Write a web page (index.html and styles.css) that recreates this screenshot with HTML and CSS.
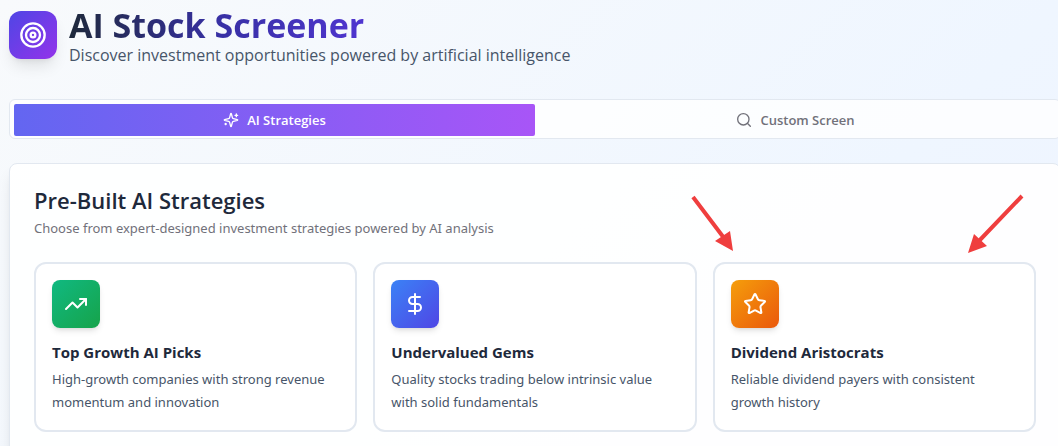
FILE: index.html
```html
<!DOCTYPE html>
<html lang="en">

<head>
    <meta charset="UTF-8">
    <meta name="viewport" content="width=device-width, initial-scale=1.0">
    <title>AI Stock Screener</title>
    <link rel="stylesheet" href="styles.css">
</head>

<body>
    <main class="page">
        <header class="header">
            <div class="logo">
                <svg class="icon-lg" viewBox="0 0 24 24">
                    <circle cx="12" cy="12" r="10" />
                    <circle cx="12" cy="12" r="6" />
                    <circle cx="12" cy="12" r="2" />
                </svg>
            </div>
            <div>
                <h1>AI Stock Screener</h1>
                <p class="subtitle">Discover investment opportunities powered by artificial intelligence</p>
            </div>
        </header>

        <div class="tabs" role="tablist">
            <button type="button" class="tab active" role="tab" aria-selected="true">
                <svg class="icon-sm" viewBox="0 0 24 24">
                    <path d="M9.94 15.5A2 2 0 0 0 8.5 14.06l-6.14-1.58a.5.5 0 0 1 0-.96L8.5 9.94A2 2 0 0 0 9.94 8.5l1.58-6.14a.5.5 0 0 1 .96 0l1.58 6.14a2 2 0 0 0 1.44 1.44l6.14 1.58a.5.5 0 0 1 0 .96l-6.14 1.58a2 2 0 0 0-1.44 1.44l-1.58 6.14a.5.5 0 0 1-.96 0z" />
                    <path d="M20 3v4M22 5h-4M4 17v2M5 18H3" />
                </svg>
                AI Strategies
            </button>
            <button type="button" class="tab" role="tab" aria-selected="false">
                <svg class="icon-sm" viewBox="0 0 24 24">
                    <circle cx="11" cy="11" r="8.5" />
                    <path d="m21.5 21.5-4.5-4.5" />
                </svg>
                Custom Screen
            </button>
        </div>

        <section class="panel">
            <h2>Pre-Built AI Strategies</h2>
            <p class="description">Choose from expert-designed investment strategies powered by AI analysis</p>

            <div class="cards">
                <article class="card">
                    <div class="card-icon green">
                        <svg class="icon" viewBox="0 0 24 24">
                            <path d="M22 7l-8.5 8.5-5-5L2 17" />
                            <path d="M16 7h6v6" />
                        </svg>
                    </div>
                    <h3>Top Growth AI Picks</h3>
                    <p>High-growth companies with strong revenue momentum and innovation</p>
                </article>
                <article class="card">
                    <div class="card-icon blue">
                        <svg class="icon" viewBox="0 0 24 24">
                            <path d="M12 2v20" />
                            <path d="M17 5H9.5a3.5 3.5 0 0 0 0 7h5a3.5 3.5 0 0 1 0 7H6" />
                        </svg>
                    </div>
                    <h3>Undervalued Gems</h3>
                    <p>Quality stocks trading below intrinsic value with solid fundamentals</p>
                </article>
                <article class="card">
                    <div class="card-icon orange">
                        <svg class="icon" viewBox="0 0 24 24">
                            <path d="M11.53 2.3a.53.53 0 0 1 .95 0l2.31 4.68a2.12 2.12 0 0 0 1.6 1.16l5.16.76a.53.53 0 0 1 .3.9l-3.74 3.64a2.12 2.12 0 0 0-.61 1.88l.88 5.14a.53.53 0 0 1-.77.56l-4.62-2.43a2.12 2.12 0 0 0-1.97 0L6.4 21.02a.53.53 0 0 1-.77-.56l.88-5.14a2.12 2.12 0 0 0-.61-1.88L2.16 9.8a.53.53 0 0 1 .3-.9l5.16-.76a2.12 2.12 0 0 0 1.6-1.16z" />
                        </svg>
                    </div>
                    <h3>Dividend Aristocrats</h3>
                    <p>Reliable dividend payers with consistent growth history</p>
                </article>
            </div>

            <svg class="arrows" width="340" height="64" viewBox="0 0 340 64">
                <path class="shaft" d="M3 5l31 41M332 4l-44 46" />
                <path class="head" d="M43 59l-18-10 15-10zM278 61l6-19 13 12z" />
            </svg>
        </section>
    </main>
</body>
</html>
```

FILE: styles.css
```css
* {
    box-sizing: border-box;
    margin: 0;
}

body {
    min-height: 100vh;
    overflow: hidden;
    font-family: "Open Sans", "Noto Sans", sans-serif;
    color: #1e293b;
    background: linear-gradient(135deg, #f8fafc, #eff6ff 70%, #eef2ff 120%);
}

/* the page runs slightly past the right edge of the window */
.page {
    margin-right: -3px;
    padding: 3px 0 0 9px;
}

svg {
    fill: none;
    stroke: currentColor;
    stroke-width: 2;
    stroke-linecap: round;
    stroke-linejoin: round;
}

.icon-lg {
    width: 28px;
    height: 28px;
}

.icon {
    width: 24px;
    height: 24px;
}

.icon-sm {
    width: 16px;
    height: 16px;
}

.header {
    display: flex;
    align-items: center;
    gap: 12px;
    margin-bottom: 32px;
}

.logo {
    display: flex;
    align-items: center;
    justify-content: center;
    width: 48px;
    height: 48px;
    border-radius: 12px;
    color: white;
    background: linear-gradient(135deg, #4f46e5, #9333ea);
    box-shadow: 0 10px 15px -3px rgba(0, 0, 0, 0.1), 0 4px 6px -4px rgba(0, 0, 0, 0.1);
}

h1 {
    width: fit-content;
    padding-top: 3px;
    font-size: 34px;
    line-height: 38px;
    font-weight: 700;
    color: transparent;
    background: linear-gradient(to right, #1e293b, #3730a3 50%, #4f35d0);
    background-clip: text;
    -webkit-background-clip: text;
}

.subtitle {
    font-size: 16px;
    line-height: 23px;
    color: #475569;
}

.tabs {
    display: grid;
    grid-template-columns: 1fr 1fr;
    height: 40px;
    padding: 4px 4px 2px;
    margin-bottom: 24px;
    border: 1px solid #e2e8f0;
    border-radius: 6px;
    background: rgba(255, 255, 255, 0.8);
}

.tab {
    display: flex;
    align-items: center;
    justify-content: center;
    gap: 8px;
    border: none;
    border-radius: 2px;
    font-family: inherit;
    font-size: 13px;
    font-weight: 600;
    color: #71717a;
    background: none;
}

.tab.active {
    color: white;
    background: linear-gradient(to right, #6366f1, #a855f7);
}

.panel {
    position: relative;
    padding: 24px;
    border: 1px solid #e2e8f0;
    border-radius: 8px;
    background: rgba(255, 255, 255, 0.9);
    box-shadow: 0 10px 15px -3px rgba(0, 0, 0, 0.1), 0 4px 6px -4px rgba(0, 0, 0, 0.1);
}

h2 {
    margin-bottom: 6px;
    font-size: 22px;
    line-height: 24px;
    font-weight: 600;
}

.description {
    margin-bottom: 24px;
    font-family: "Noto Sans", sans-serif;
    font-size: 13px;
    line-height: 20px;
    color: #71717a;
}

.cards {
    display: grid;
    grid-template-columns: repeat(3, 1fr);
    gap: 16px;
}

.card {
    padding: 16px;
    border: 2px solid #e2e8f0;
    border-radius: 12px;
    background: white;
}

.card-icon {
    display: flex;
    align-items: center;
    justify-content: center;
    width: 48px;
    height: 48px;
    margin-bottom: 12px;
    border-radius: 8px;
    color: white;
    box-shadow: 0 4px 6px -1px rgba(0, 0, 0, 0.1), 0 2px 4px -2px rgba(0, 0, 0, 0.1);
}

.green {
    background: linear-gradient(135deg, #10b981, #16a34a);
}

.blue {
    background: linear-gradient(135deg, #3b82f6, #4f46e5);
}

.orange {
    background: linear-gradient(135deg, #f59e0b, #ea580c);
}

.card h3 {
    margin-bottom: 4px;
    font-size: 15px;
    line-height: 24px;
    font-weight: 700;
}

.card p {
    font-family: "Noto Sans", sans-serif;
    font-size: 13px;
    line-height: 23px;
    color: #475569;
}

/* callout arrows pointing at the last card */
.arrows {
    position: absolute;
    top: 28px;
    right: 30px;
}

.shaft {
    stroke: #ef3e3e;
    stroke-width: 4;
    stroke-linecap: butt;
}

.head {
    fill: #ef3e3e;
    stroke: none;
}
```
